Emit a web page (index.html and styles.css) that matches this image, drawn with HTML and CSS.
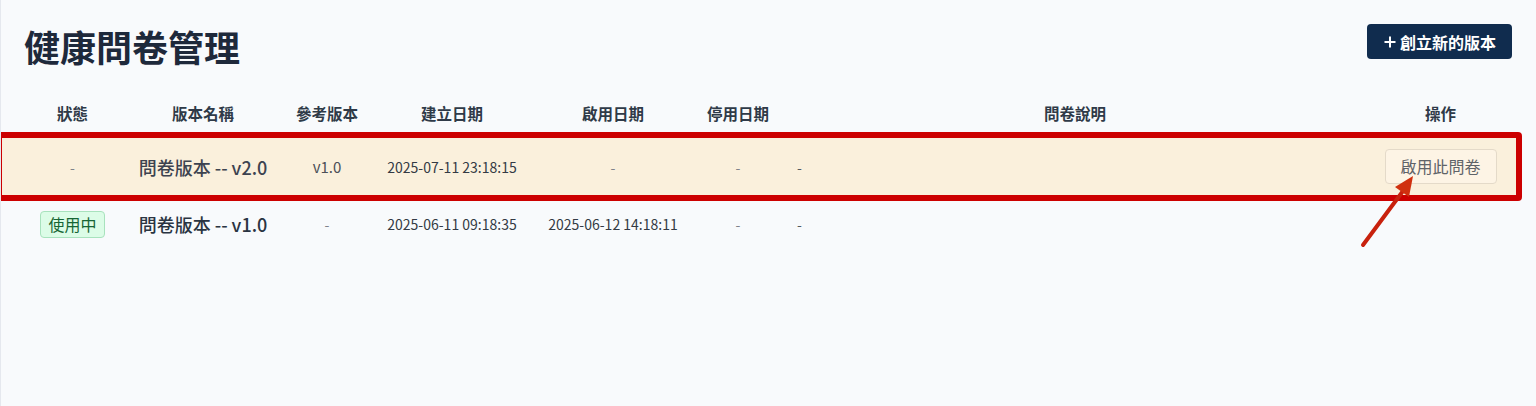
FILE: index.html
```html
<!DOCTYPE html>
<html lang="zh-Hant">
<head>
<meta charset="utf-8">
<title>健康問卷管理</title>
<link rel="stylesheet" href="styles.css">
</head>
<body>
<main class="page">
  <header class="top">
    <h1 class="title">健康問卷管理</h1>
    <button class="btn-primary" type="button">
      <svg class="plus" viewBox="0 0 12 12" width="12" height="12" aria-hidden="true"><path d="M6 0.5V11.5M0.5 6H11.5" stroke="#fff" stroke-width="2" fill="none"/></svg>
      <span>創立新的版本</span>
    </button>
  </header>

  <div class="table-wrap">
    <table class="versions">
      <colgroup>
        <col class="c-status"><col class="c-name"><col class="c-ref"><col class="c-created"><col class="c-enabled"><col class="c-disabled"><col class="c-desc"><col class="c-ops">
      </colgroup>
      <thead>
        <tr>
          <th class="first">狀態</th>
          <th>版本名稱</th>
          <th>參考版本</th>
          <th>建立日期</th>
          <th>啟用日期</th>
          <th>停用日期</th>
          <th>問卷說明</th>
          <th>操作</th>
        </tr>
      </thead>
      <tbody>
        <tr class="row-draft">
          <td class="first muted">-</td>
          <td class="name">問卷版本 -- v2.0</td>
          <td class="ref">v1.0</td>
          <td class="date">2025-07-11 23:18:15</td>
          <td class="muted">-</td>
          <td class="muted">-</td>
          <td class="desc">-</td>
          <td><button class="btn-activate" type="button">啟用此問卷</button></td>
        </tr>
        <tr class="row-active">
          <td class="first"><span class="badge">使用中</span></td>
          <td class="name">問卷版本 -- v1.0</td>
          <td class="muted">-</td>
          <td class="date">2025-06-11 09:18:35</td>
          <td class="date">2025-06-12 14:18:11</td>
          <td class="muted">-</td>
          <td class="desc">-</td>
          <td></td>
        </tr>
      </tbody>
    </table>
    <div class="annot-box"></div>
    <svg class="annot-arrow" viewBox="0 0 64 82" width="64" height="82" aria-hidden="true">
      <line x1="8" y1="75" x2="48" y2="21" stroke="#c8210d" stroke-width="4" stroke-linecap="round"/>
      <polygon points="58,6 54,27 40,17" fill="#d0300f"/>
    </svg>
  </div>
</main>
</body>
</html>
```

FILE: styles.css
```css
* { box-sizing: border-box; }

html, body {
  margin: 0;
  padding: 0;
  background: #f8fafc;
}

body {
  font-family: "Noto Sans CJK TC", "Noto Sans", sans-serif;
  color: #1e293b;
  min-height: 406px;
  border-left: 1px solid #e5e8ee;
}

.page {
  padding: 24px 24px 0 23px;
}

.top {
  display: flex;
  justify-content: space-between;
  align-items: flex-start;
  height: 44px;
}

.title {
  margin: 0;
  font-size: 36px;
  line-height: 44px;
  font-weight: 700;
  color: #1e293b;
  letter-spacing: 0;
}

.btn-primary {
  display: inline-flex;
  align-items: center;
  gap: 4px;
  height: 35px;
  padding: 0 16px 0 17px;
  border: 0;
  border-radius: 4px;
  background: #102c4e;
  color: #ffffff;
  font-family: inherit;
  font-size: 16px;
  font-weight: 700;
  line-height: 1;
}

.plus { display: block; }

.table-wrap {
  position: relative;
  margin: 20px -4px 0 -24px;
}

.versions {
  width: 1516px;
  border-collapse: collapse;
  table-layout: fixed;
}

.c-status { width: 121px; }
.c-name { width: 164px; }
.c-ref { width: 84px; }
.c-created { width: 166px; }
.c-enabled { width: 156px; }
.c-disabled { width: 94px; }
.c-desc { width: 580px; }
.c-ops { width: 151px; }

.versions th {
  height: 50px;
  padding: 0;
  font-size: 15.5px;
  font-weight: 700;
  color: #2f3a48;
  text-align: center;
  vertical-align: middle;
  white-space: nowrap;
}

.versions td {
  padding: 0 12px;
  text-align: center;
  vertical-align: middle;
  font-size: 14px;
  color: #333a44;
  white-space: nowrap;
}

.versions .first {
  padding-left: 24px;
  padding-right: 0;
}

.row-draft td { height: 57px; background: #faf0dc; }
.row-active td { height: 58px; }

.versions td.name {
  padding: 0;
  font-size: 18px;
  font-weight: 500;
  color: #2a3442;
}

.row-draft td.name { color: #3d4350; }

.versions td.ref {
  font-size: 15px;
  color: #4b4f57;
}

.versions td.date {
  font-size: 14px;
  color: #333a44;
}

.versions td.muted { color: #80838a; }

.versions td.desc {
  text-align: left;
  color: #555a62;
}

.badge {
  display: inline-block;
  height: 27px;
  padding: 0 7px;
  border: 1px solid #a8e2bd;
  border-radius: 4px;
  background: #dcfce7;
  color: #166534;
  font-size: 16px;
  line-height: 25px;
}

.btn-activate {
  display: inline-block;
  width: 112px;
  height: 35px;
  padding: 0;
  border: 1px solid #e4dac9;
  border-radius: 4px;
  background: #fdf4e5;
  color: #5f6368;
  font-family: inherit;
  font-size: 16px;
  line-height: 33px;
}

.annot-box {
  position: absolute;
  left: -4px;
  top: 44px;
  width: 1526px;
  height: 69px;
  border: 6px solid #cc0000;
  border-radius: 4px;
  pointer-events: none;
}

.annot-arrow {
  position: absolute;
  left: 1355px;
  top: 82px;
}
```
